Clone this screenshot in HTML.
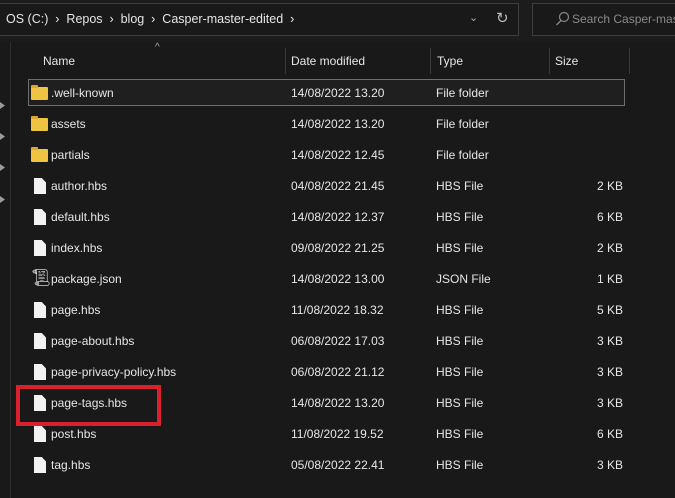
<!DOCTYPE html>
<html><head><style>
*{margin:0;padding:0;box-sizing:border-box}
body{width:675px;height:498px;background:#191919;font-family:"Liberation Sans",sans-serif;font-size:12px;color:#e6e6e6;position:relative;overflow:hidden}
.top{position:absolute;left:0;top:0;width:675px;height:42px;background:#1c1c1c}
.addr{position:absolute;left:-2px;top:3px;width:521px;height:33px;border:1px solid #3d3d3d;background:#191919}
.srch{position:absolute;left:532px;top:3px;width:150px;height:33px;border:1px solid #3d3d3d;background:#191919}
.t{position:absolute;white-space:nowrap}
.sep{position:absolute;top:48px;width:1px;height:26px;background:#3a3a3a}
.hl{position:absolute;left:28px;top:79px;width:597px;height:27px;border:1px solid #6e6e6e;background:#1f1f1f}
.folder{position:absolute;left:31px;width:17px;height:13px;background:#f0c443;border-radius:1px}
.folder:before{content:"";position:absolute;left:0;top:-2px;width:7px;height:3px;background:#d9a830;border-radius:1px 1px 0 0}
.file{position:absolute;left:34px;width:12px;height:16px;background:#f2f2f2;clip-path:polygon(0 0,65% 0,100% 28%,100% 100%,0 100%)}
.red{position:absolute;left:16px;top:385px;width:145px;height:41px;border:4px solid #d9202c}
.lv{position:absolute;left:10px;top:42px;width:1px;height:456px;background:#2e2e2e}
.arr{position:absolute;left:0;width:5px;height:7px;background:#9a9a9a;clip-path:polygon(0 0,100% 50%,0 100%)}
</style></head><body>
<div class="top"></div>
<div class="addr"></div>
<div class="srch"></div>
<div class="t" style="left:6px;top:12px;font-size:12.5px">OS (C:) &nbsp;›&nbsp; Repos &nbsp;›&nbsp; blog &nbsp;›&nbsp; Casper-master-edited &nbsp;›</div>
<div class="t" style="left:469px;top:11px;color:#aaa;font-size:11px">⌄</div>
<div class="t" style="left:496px;top:9px;color:#bbb;font-size:15px">↻</div>
<svg style="position:absolute;left:555px;top:11px" width="14" height="16"><circle cx="9" cy="6" r="4.5" fill="none" stroke="#888" stroke-width="1.2"/><line x1="6" y1="9.5" x2="1.5" y2="14" stroke="#888" stroke-width="1.3"/></svg>
<div class="t" style="left:572px;top:12px;color:#8a8a8a">Search Casper-mast</div>
<div class="lv"></div>
<div class="arr" style="top:102px"></div><div class="arr" style="top:133px"></div><div class="arr" style="top:164px"></div><div class="arr" style="top:196px"></div>
<div class="t" style="left:155px;top:42px;color:#aaa;font-size:10px">^</div>
<div class="t" style="left:43px;top:54px">Name</div>
<div class="t" style="left:291px;top:54px">Date modified</div>
<div class="t" style="left:437px;top:54px">Type</div>
<div class="t" style="left:555px;top:54px">Size</div>
<div class="sep" style="left:285px"></div><div class="sep" style="left:430px"></div><div class="sep" style="left:549px"></div><div class="sep" style="left:629px"></div>
<div class="hl"></div>

<div class="folder" style="top:87px"></div><div class="t" style="left:51px;top:86px">.well-known</div><div class="t" style="left:291px;top:86px">14/08/2022 13.20</div><div class="t" style="left:436px;top:86px">File folder</div>
<div class="folder" style="top:118px"></div><div class="t" style="left:51px;top:117px">assets</div><div class="t" style="left:291px;top:117px">14/08/2022 13.20</div><div class="t" style="left:436px;top:117px">File folder</div>
<div class="folder" style="top:149px"></div><div class="t" style="left:51px;top:148px">partials</div><div class="t" style="left:291px;top:148px">14/08/2022 12.45</div><div class="t" style="left:436px;top:148px">File folder</div>

<div class="file" style="top:178px"></div><div class="t" style="left:51px;top:179px">author.hbs</div><div class="t" style="left:291px;top:179px">04/08/2022 21.45</div><div class="t" style="left:436px;top:179px">HBS File</div><div class="t" style="left:597px;top:179px">2 KB</div>
<div class="file" style="top:209px"></div><div class="t" style="left:51px;top:210px">default.hbs</div><div class="t" style="left:291px;top:210px">14/08/2022 12.37</div><div class="t" style="left:436px;top:210px">HBS File</div><div class="t" style="left:597px;top:210px">6 KB</div>
<div class="file" style="top:240px"></div><div class="t" style="left:51px;top:241px">index.hbs</div><div class="t" style="left:291px;top:241px">09/08/2022 21.25</div><div class="t" style="left:436px;top:241px">HBS File</div><div class="t" style="left:597px;top:241px">2 KB</div>
<div class="t" style="left:31px;top:268px;font-size:16px;color:#eee">&#x1F4DC;&#xFE0E;</div><div class="t" style="left:51px;top:272px">package.json</div><div class="t" style="left:291px;top:272px">14/08/2022 13.00</div><div class="t" style="left:436px;top:272px">JSON File</div><div class="t" style="left:597px;top:272px">1 KB</div>
<div class="file" style="top:302px"></div><div class="t" style="left:51px;top:303px">page.hbs</div><div class="t" style="left:291px;top:303px">11/08/2022 18.32</div><div class="t" style="left:436px;top:303px">HBS File</div><div class="t" style="left:597px;top:303px">5 KB</div>
<div class="file" style="top:333px"></div><div class="t" style="left:51px;top:334px">page-about.hbs</div><div class="t" style="left:291px;top:334px">06/08/2022 17.03</div><div class="t" style="left:436px;top:334px">HBS File</div><div class="t" style="left:597px;top:334px">3 KB</div>
<div class="file" style="top:364px"></div><div class="t" style="left:51px;top:365px">page-privacy-policy.hbs</div><div class="t" style="left:291px;top:365px">06/08/2022 21.12</div><div class="t" style="left:436px;top:365px">HBS File</div><div class="t" style="left:597px;top:365px">3 KB</div>
<div class="file" style="top:395px"></div><div class="t" style="left:51px;top:396px">page-tags.hbs</div><div class="t" style="left:291px;top:396px">14/08/2022 13.20</div><div class="t" style="left:436px;top:396px">HBS File</div><div class="t" style="left:597px;top:396px">3 KB</div>
<div class="file" style="top:426px"></div><div class="t" style="left:51px;top:427px">post.hbs</div><div class="t" style="left:291px;top:427px">11/08/2022 19.52</div><div class="t" style="left:436px;top:427px">HBS File</div><div class="t" style="left:597px;top:427px">6 KB</div>
<div class="file" style="top:457px"></div><div class="t" style="left:51px;top:458px">tag.hbs</div><div class="t" style="left:291px;top:458px">05/08/2022 22.41</div><div class="t" style="left:436px;top:458px">HBS File</div><div class="t" style="left:597px;top:458px">3 KB</div>
<div class="red"></div>
</body></html>
